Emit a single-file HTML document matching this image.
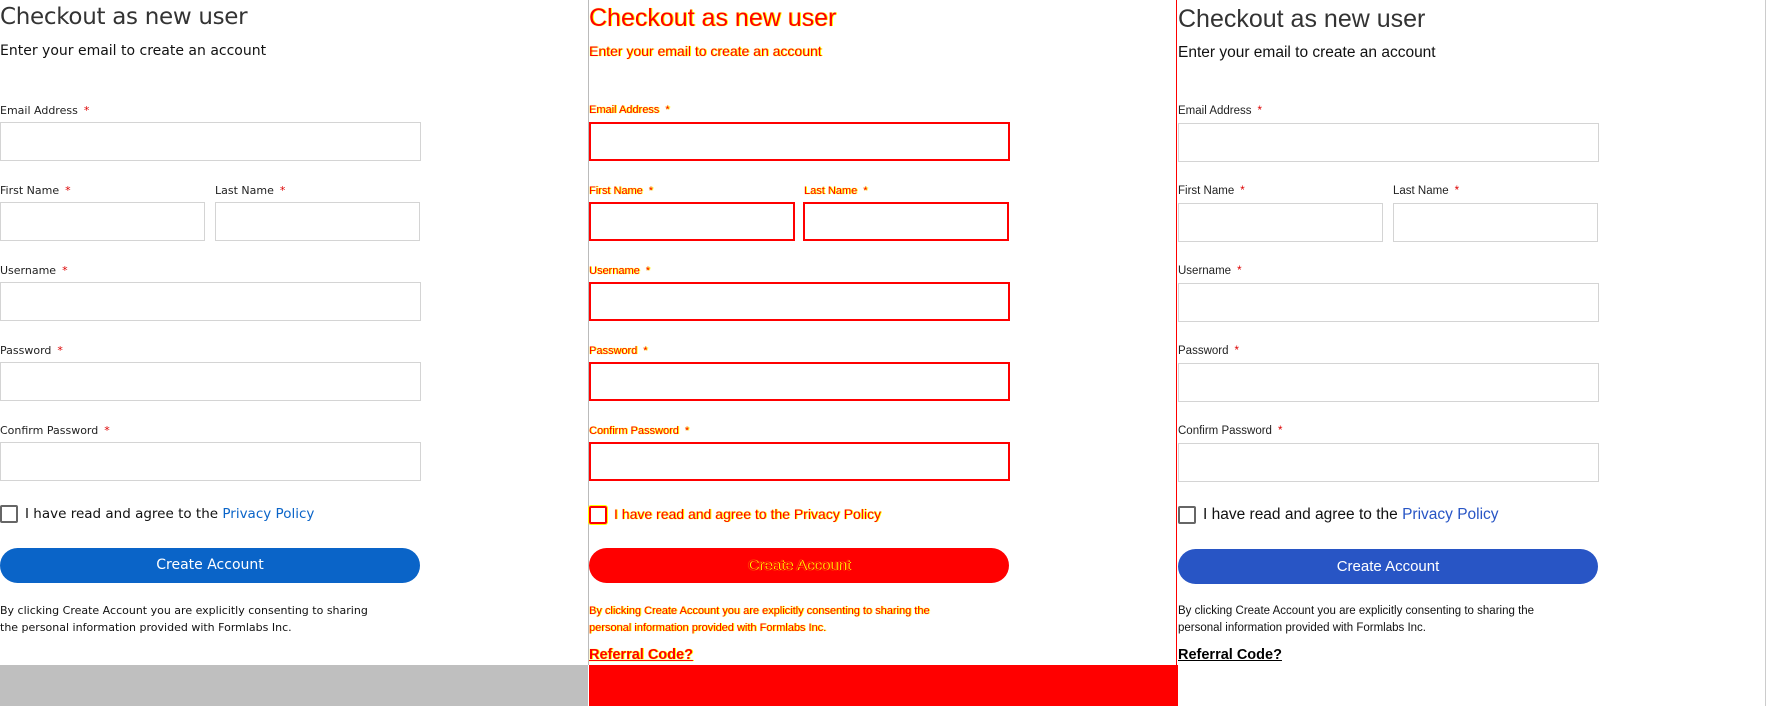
<!DOCTYPE html>
<html><head><meta charset="utf-8"><style>
*{margin:0;padding:0;box-sizing:border-box}
body{width:1767px;height:706px;position:relative;overflow:hidden;background:#fff;font-family:"Liberation Sans",sans-serif;color:#222}
.p{position:absolute;top:0;width:588px;height:706px}
.p *{position:absolute;white-space:nowrap}
.t{left:0;top:4px;font-size:25px;color:#333}
.s{left:0;top:43px;font-size:15.5px;color:#111}
.l{font-size:11.5px;color:#222}
.l b{color:#d00;font-weight:normal;margin-left:6px}
.i{border:1px solid #d4d4d4;height:39px;background:#fff}
.cb{left:0;width:18px;height:18px;border:2px solid #666;border-radius:2px}
.ag{left:25px;font-size:15.5px;color:#111}
.ag span{position:static;color:#0a64c8}
.btn{left:0;width:420px;height:35px;border-radius:18px;background:#0a64c8;color:#fff;font-size:15px;text-align:center;line-height:35px}
.fp{left:0;font-size:11.5px;line-height:17px;color:#111}
.rc{left:0;font-size:14.5px;font-weight:bold;text-decoration:underline;color:#000}
.p1{font-family:"DejaVu Sans",sans-serif}
.p1 .t{font-size:23px;letter-spacing:-0.3px}
.p1 .s{font-size:14px}
.p1 .ag{font-size:13.5px}
.p1 .btn{font-size:14px}
.p1 .fp{font-size:11px}
.p1 .l{font-size:11px}
.p2{color:red}
.p2 *{color:red!important;text-shadow:0 0 1px #ff0,1px 0 0 #ff0}
.p2 .i{border:2px solid red}
.p2 .cb{border:2px solid red;box-shadow:0 0 0 1px #ff0}
.p2 .btn{background:red}
.p3 .btn{background:#2855c5}
.p3 .ag span{color:#2855c5}
</style></head><body>

<div class="p p1" style="left:0">
<div class="t">Checkout as new user</div>
<div class="s">Enter your email to create an account</div>
<div class="l" style="top:104px">Email Address <b>*</b></div>
<div class="i" style="top:122px;left:0;width:421px"></div>
<div class="l" style="top:184px">First Name <b>*</b></div>
<div class="l" style="top:184px;left:215px">Last Name <b>*</b></div>
<div class="i" style="top:202px;left:0;width:205px"></div>
<div class="i" style="top:202px;left:215px;width:205px"></div>
<div class="l" style="top:264px">Username <b>*</b></div>
<div class="i" style="top:282px;left:0;width:421px"></div>
<div class="l" style="top:344px">Password <b>*</b></div>
<div class="i" style="top:362px;left:0;width:421px"></div>
<div class="l" style="top:424px">Confirm Password <b>*</b></div>
<div class="i" style="top:442px;left:0;width:421px"></div>
<div class="cb" style="top:505px"></div>
<div class="ag" style="top:506px">I have read and agree to the <span>Privacy Policy</span></div>
<div class="btn" style="top:548px">Create Account</div>
<div class="fp" style="top:602px">By clicking Create Account you are explicitly consenting to sharing<br>the personal information provided with Formlabs Inc.</div>
<div style="left:0;top:665px;width:588px;height:41px;background:#bfbfbf"></div>
</div>

<div style="position:absolute;left:588px;top:0;width:1px;height:665px;background:#bbb"></div>

<div class="p p2" style="left:589px">
<div class="t">Checkout as new user</div>
<div class="s" style="font-size:14px">Enter your email to create an account</div>
<div class="l" style="top:104px;font-size:11px">Email Address <b>*</b></div>
<div class="i" style="top:122px;left:0;width:421px"></div>
<div class="l" style="top:185px;font-size:11px">First Name <b>*</b></div>
<div class="l" style="top:185px;left:215px;font-size:11px">Last Name <b>*</b></div>
<div class="i" style="top:202px;left:0;width:206px"></div>
<div class="i" style="top:202px;left:214px;width:206px"></div>
<div class="l" style="top:265px;font-size:11px">Username <b>*</b></div>
<div class="i" style="top:282px;left:0;width:421px"></div>
<div class="l" style="top:345px;font-size:11px">Password <b>*</b></div>
<div class="i" style="top:362px;left:0;width:421px"></div>
<div class="l" style="top:425px;font-size:11px">Confirm Password <b>*</b></div>
<div class="i" style="top:442px;left:0;width:421px"></div>
<div class="cb" style="top:506px"></div>
<div class="ag" style="top:506px;font-size:14px">I have read and agree to the <span>Privacy Policy</span></div>
<div class="btn" style="top:548px">Create Account</div>
<div class="fp" style="top:603px;font-size:11px">By clicking Create Account you are explicitly consenting to sharing the<br>personal information provided with Formlabs Inc.</div>
<div class="rc" style="top:647px">Referral Code?</div>
<div style="left:0;top:665px;width:589px;height:41px;background:red;text-shadow:none"></div>
</div>

<div style="position:absolute;left:1176px;top:0;width:1px;height:665px;background:red"></div>
<div style="position:absolute;left:1765px;top:0;width:1px;height:706px;background:#ccc"></div>

<div class="p p3" style="left:1178px">
<div class="t" style="top:5px">Checkout as new user</div>
<div class="s" style="top:44px">Enter your email to create an account</div>
<div class="l" style="top:105px">Email Address <b>*</b></div>
<div class="i" style="top:123px;left:0;width:421px"></div>
<div class="l" style="top:185px">First Name <b>*</b></div>
<div class="l" style="top:185px;left:215px">Last Name <b>*</b></div>
<div class="i" style="top:203px;left:0;width:205px"></div>
<div class="i" style="top:203px;left:215px;width:205px"></div>
<div class="l" style="top:265px">Username <b>*</b></div>
<div class="i" style="top:283px;left:0;width:421px"></div>
<div class="l" style="top:345px">Password <b>*</b></div>
<div class="i" style="top:363px;left:0;width:421px"></div>
<div class="l" style="top:425px">Confirm Password <b>*</b></div>
<div class="i" style="top:443px;left:0;width:421px"></div>
<div class="cb" style="top:506px"></div>
<div class="ag" style="top:506px">I have read and agree to the <span>Privacy Policy</span></div>
<div class="btn" style="top:549px">Create Account</div>
<div class="fp" style="top:603px">By clicking Create Account you are explicitly consenting to sharing the<br>personal information provided with Formlabs Inc.</div>
<div class="rc" style="top:647px">Referral Code?</div>
</div>

</body></html>
